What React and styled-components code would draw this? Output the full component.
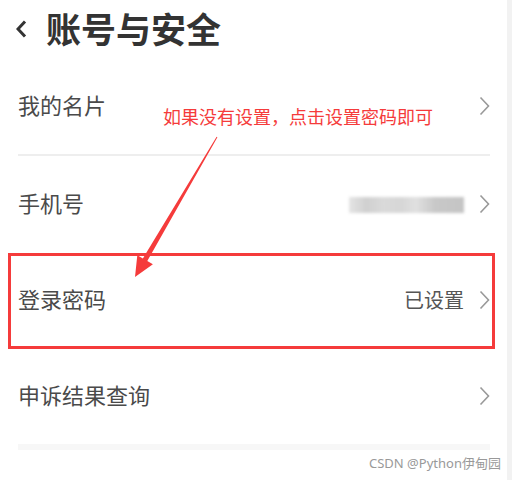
import React from "react";
import styled, { createGlobalStyle } from "styled-components";

const GlobalStyle = createGlobalStyle`
  html, body { margin: 0; padding: 0; background: #fff; }
  body { font-family: "Noto Sans", "Noto Sans CJK SC", sans-serif; }
`;

const Page = styled.div`
  position: relative;
  display: flex;
  width: 512px;
  height: 480px;
  overflow: hidden;
  background: #fff;
`;

const Main = styled.div`
  flex: 1;
  display: flex;
  flex-direction: column;
  padding: 0 17px 0 18px;
`;

const Strip = styled.div`
  width: 5px;
  background: #f2f2f2;
`;

const Header = styled.div`
  height: 58px;
  display: flex;
  align-items: center;
  gap: 19px;
  margin-left: -2px;
`;

const Title = styled.h1`
  margin: 0 0 4px 0;
  font-family: "Noto Sans CJK SC", sans-serif;
  font-size: 35px;
  font-weight: 700;
  color: #333;
  line-height: 1;
`;

const Row = styled.div`
  height: 96px;
  display: flex;
  align-items: center;
  justify-content: space-between;
`;

const Label = styled.span`
  margin-bottom: 4px;
  font-family: "Noto Sans CJK SC", sans-serif;
  font-size: 22px;
  color: #4a4a4a;
`;

const Right = styled.div`
  display: flex;
  align-items: center;
  gap: 15px;
`;

const Value = styled.span`
  margin-bottom: 2px;
  font-family: "Noto Sans CJK SC", sans-serif;
  font-size: 20px;
  color: #555;
`;

const Blurred = styled.div`
  width: 115px;
  height: 16px;
  margin-top: 2px;
  background: linear-gradient(
    90deg,
    #e4e4e4 0%,
    #d0d0d0 15%,
    #dadada 30%,
    #d6d6d6 45%,
    #e0e0e0 58%,
    #c8c8c8 75%,
    #c4c4c4 100%
  );
  filter: blur(1.5px);
`;

const Divider = styled.div`
  height: 2px;
  background: #eeeeee;
`;

const BottomBar = styled.div`
  height: 6px;
  background: #f7f7f7;
`;

const Box = styled.div`
  position: absolute;
  left: 8px;
  top: 253px;
  width: 481px;
  height: 90px;
  border: 3px solid #f53b3b;
`;

const Note = styled.div`
  position: absolute;
  left: 163px;
  top: 104px;
  font-family: "Noto Sans CJK SC", sans-serif;
  font-size: 18px;
  line-height: 24px;
  color: #f53b3b;
  white-space: nowrap;
`;

const ArrowSvg = styled.svg`
  position: absolute;
  left: 0;
  top: 0;
  pointer-events: none;
`;

const Watermark = styled.div`
  position: absolute;
  left: 369px;
  top: 454px;
  font-family: "Noto Sans", "Noto Sans CJK SC", sans-serif;
  font-size: 13px;
  line-height: 18px;
  color: #999;
  white-space: nowrap;
`;

const Chevron = () => (
  <svg width="11" height="20" viewBox="0 0 11 20">
    <path d="M1.5 1.5 L9.5 10 L1.5 18.5" fill="none" stroke="#999" strokeWidth="1.6" />
  </svg>
);

const Back = () => (
  <svg width="11" height="18" viewBox="0 0 11 18">
    <path d="M9 1.5 L2 9 L9 16.5" fill="none" stroke="#333" strokeWidth="3" />
  </svg>
);

export default function App() {
  return (
    <>
      <GlobalStyle />
      <Page>
        <Main>
          <Header>
            <Back />
            <Title>账号与安全</Title>
          </Header>
          <Row>
            <Label>我的名片</Label>
            <Right>
              <Chevron />
            </Right>
          </Row>
          <Divider />
          <Row>
            <Label>手机号</Label>
            <Right>
              <Blurred />
              <Chevron />
            </Right>
          </Row>
          <Row>
            <Label>登录密码</Label>
            <Right>
              <Value>已设置</Value>
              <Chevron />
            </Right>
          </Row>
          <Row>
            <Label>申诉结果查询</Label>
            <Right>
              <Chevron />
            </Right>
          </Row>
          <BottomBar />
        </Main>
        <Strip />
        <Box />
        <Note>如果没有设置，点击设置密码即可</Note>
        <ArrowSvg width="512" height="480" viewBox="0 0 512 480">
          <polygon
            points="216.6,136.8 217.4,137.2 147.3,261 152.9,264.2 135,277 137.3,255.2 142.9,258.4"
            fill="#f53b3b"
          />
        </ArrowSvg>
        <Watermark>CSDN @Python伊甸园</Watermark>
      </Page>
    </>
  );
}
